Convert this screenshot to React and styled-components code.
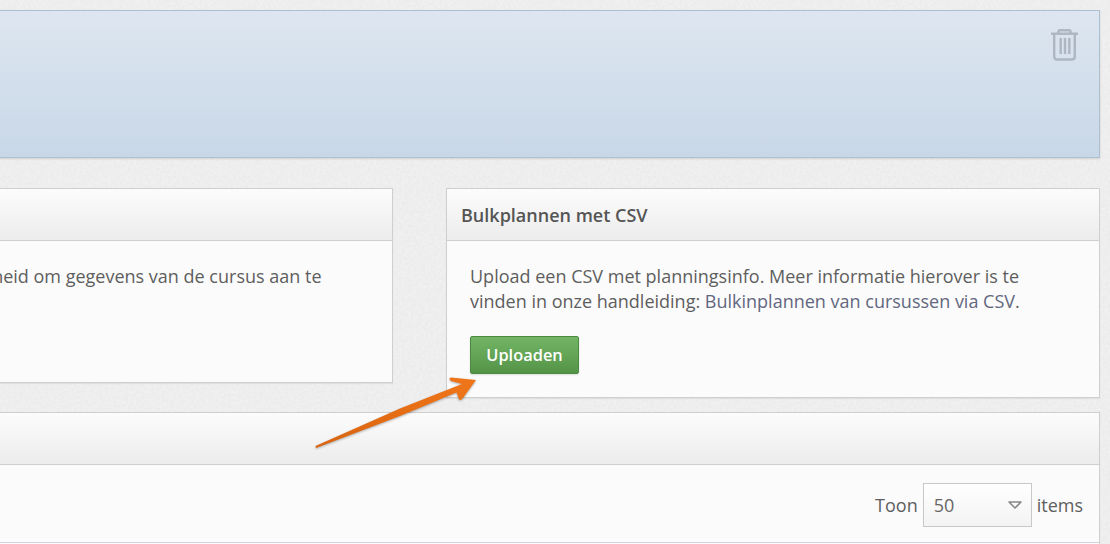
import styled, { createGlobalStyle } from 'styled-components';

const noise = `url("data:image/svg+xml,%3Csvg xmlns='http://www.w3.org/2000/svg' width='240' height='240'%3E%3Cfilter id='n'%3E%3CfeTurbulence type='fractalNoise' baseFrequency='0.35' numOctaves='2' stitchTiles='stitch'/%3E%3CfeColorMatrix values='0 0 0 0 0.55 0 0 0 0 0.55 0 0 0 0 0.55 0 0 0 0.22 -0.04'/%3E%3C/filter%3E%3Crect width='240' height='240' filter='url(%23n)'/%3E%3C/svg%3E")`;

const GlobalStyle = createGlobalStyle`
    html, body {
        margin: 0;
        padding: 0;
        height: 100%;
        overflow: hidden;
        background: #f1f1f1 ${noise};
    }
    body {
        font-family: "Open Sans", "Noto Sans", sans-serif;
        color: #5a5a5a;
    }
`;

const Page = styled.div`
    position: relative;
    width: 1110px;
    height: 544px;
    overflow: hidden;
`;

const Content = styled.div`
    display: flex;
    flex-direction: column;
    gap: 30px;
    width: 1360px;
    margin-left: -260px;
    padding-top: 10px;
`;

const Banner = styled.div`
    box-sizing: border-box;
    display: flex;
    justify-content: flex-end;
    height: 148px;
    padding: 18px 20px;
    background: linear-gradient(#dde6f0, #c8d7e7);
    border: 1px solid #aebfd0;
    box-shadow: 0 1px 2px rgba(0, 0, 0, 0.12);
`;

const Columns = styled.div`
    display: flex;
    align-items: flex-start;
    gap: 53px;
    margin-bottom: -16px;
`;

const Card = styled.section`
    box-sizing: border-box;
    flex: ${(p) => p.$flex || 'none'};
    width: ${(p) => p.$width || 'auto'};
    background: #fbfbfb;
    border: 1px solid #cfcfcf;
    box-shadow: 0 1px 1px rgba(0, 0, 0, 0.06);
`;

const CardHeader = styled.header`
    box-sizing: border-box;
    display: flex;
    align-items: center;
    height: 52px;
    padding: 0 14px;
    background: linear-gradient(#fcfcfc, #ececec);
    border-bottom: 1px solid #cfcfcf;
    font-size: 18px;
    font-weight: 600;
    color: #555;
`;

const CardBody = styled.div`
    box-sizing: border-box;
    min-height: ${(p) => p.$minHeight || 0};
    padding: 23px;
    font-size: 18px;
    line-height: 25px;
    color: #5e5e5e;
`;

const Paragraph = styled.p`
    margin: 0;
    max-width: 590px;
`;

const DocLink = styled.a`
    color: #62677f;
    text-decoration: none;
`;

const UploadButton = styled.button`
    display: block;
    box-sizing: border-box;
    width: 109px;
    height: 38px;
    margin-top: 22px;
    padding: 0 0 2px;
    background: linear-gradient(#72b565, #559447);
    border: 1px solid #4d8a41;
    border-radius: 2px;
    box-shadow: 0 1px 2px rgba(0, 0, 0, 0.12);
    color: #fff;
    font-family: inherit;
    font-size: 16.4px;
    font-weight: 600;
`;

const TableTools = styled.div`
    display: flex;
    align-items: center;
    justify-content: flex-end;
    gap: 5px;
    padding: 18px 16px 15px 0;
    border-bottom: 1px solid #d3d3dc;
    font-size: 18px;
    color: #5e5e5e;
`;

const SelectBox = styled.div`
    box-sizing: border-box;
    display: flex;
    align-items: center;
    justify-content: space-between;
    width: 109px;
    height: 44px;
    padding: 0 9px 0 10px;
    background: linear-gradient(#ffffff, #f3f3f3);
    border: 1px solid #c8c8c8;
    font-size: 18px;
    color: #666;
`;

const TablePlaceholder = styled.div`
    height: 40px;
`;

const ArrowOverlay = styled.svg`
    position: absolute;
    left: 310px;
    top: 370px;
    filter: drop-shadow(0 1px 1px rgba(0, 0, 0, 0.3));
`;

const TrashIcon = () => (
    <svg width="29" height="32" viewBox="0 0 29 32" fill="none" stroke="#aeb6c1" strokeWidth="2.4">
        <path d="M1 4.700h27" />
        <path d="M8.500 4V2.500Q8.500 1.200 10 1.200h9q1.500 0 1.500 1.300V4" />
        <path d="M4.200 5v22.500q0 3 3 3h14.600q3 0 3-3V5" />
        <path d="M10.700 9v16M15 9v16M19.300 9v16" />
    </svg>
);

const CaretIcon = () => (
    <svg width="14" height="8" viewBox="0 0 14 8" fill="none" stroke="#888" strokeWidth="1.6">
        <path d="M1 1h12L7 7z" strokeLinejoin="round" />
    </svg>
);

const Arrow = () => (
    <ArrowOverlay width="175" height="85" viewBox="310 370 175 85">
        <defs>
            <linearGradient id="arrowFill" x1="0" y1="1" x2="1" y2="0">
                <stop offset="0" stopColor="#d9640f" />
                <stop offset="1" stopColor="#f0761a" />
            </linearGradient>
        </defs>
        <path
            d="M315.500 446L400 408.500L462 384L451 381Q448 378 451 377.500L476 380L463 398Q459.500 402 458.500 398L456.500 392.500L400 416L316 448Z"
            fill="url(#arrowFill)"
        />
    </ArrowOverlay>
);

export default function App() {
    return (
        <Page>
            <GlobalStyle />
            <Content>
                <Banner>
                    <TrashIcon />
                </Banner>
                <Columns>
                    <Card $flex="1">
                        <CardHeader>Cursusgegevens</CardHeader>
                        <CardBody $minHeight="141px">
                            <Paragraph>
                                Hier heb je ook de mogelijkheid om gegevens van de cursus aan te passen.
                            </Paragraph>
                        </CardBody>
                    </Card>
                    <Card $width="654px">
                        <CardHeader>Bulkplannen met CSV</CardHeader>
                        <CardBody>
                            <Paragraph>
                                Upload een CSV met planningsinfo. Meer informatie hierover is te
                                vinden in onze handleiding:{' '}
                                <DocLink href="#">Bulkinplannen van cursussen via CSV</DocLink>.
                            </Paragraph>
                            <UploadButton>Uploaden</UploadButton>
                        </CardBody>
                    </Card>
                </Columns>
                <Card>
                    <CardHeader>Planning</CardHeader>
                    <TableTools>
                        Toon
                        <SelectBox>
                            50
                            <CaretIcon />
                        </SelectBox>
                        items
                    </TableTools>
                    <TablePlaceholder />
                </Card>
            </Content>
            <Arrow />
        </Page>
    );
}
